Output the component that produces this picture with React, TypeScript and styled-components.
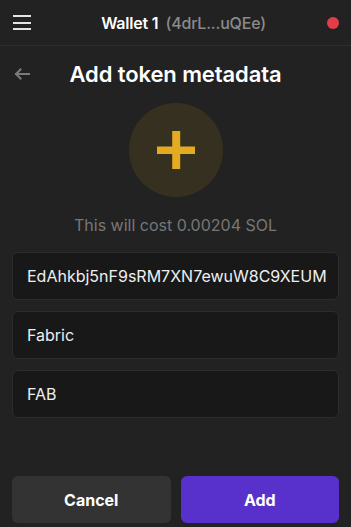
import React from "react";
import styled, { createGlobalStyle } from "styled-components";

const Global = createGlobalStyle`
  html, body { margin: 0; padding: 0; background: #222222; }
  body { font-family: Inter, "Noto Sans", sans-serif; }
  * { box-sizing: border-box; }
`;

const Screen = styled.div`
  width: 351px;
  height: 527px;
  display: flex;
  flex-direction: column;
  background: #222222;
  color: #ffffff;
`;

const Header = styled.header`
  height: 46px;
  flex-shrink: 0;
  display: grid;
  grid-template-columns: 44px 1fr 44px;
  align-items: center;
  border-bottom: 1px solid #2e2e2e;
`;

const MenuButton = styled.div`
  display: flex;
  flex-direction: column;
  gap: 4.5px;
  padding-left: 13px;
  span {
    display: block;
    width: 18px;
    height: 2px;
    background: #e4e4e4;
  }
`;

const WalletTitle = styled.div`
  display: flex;
  justify-content: center;
  gap: 7px;
  padding-left: 16px;
  font-size: 16px;
  font-weight: 600;
  letter-spacing: -0.2px;
`;

const WalletAddr = styled.span`
  color: #8a8a8a;
  font-weight: 500;
`;

const StatusDot = styled.div`
  justify-self: end;
  margin-right: 12px;
  width: 12px;
  height: 12px;
  border-radius: 50%;
  background: #e33d4a;
`;

const Body = styled.main`
  flex: 1;
  display: flex;
  flex-direction: column;
  padding: 0 12px;
`;

const TitleRow = styled.div`
  display: grid;
  grid-template-columns: 40px 1fr 40px;
  align-items: center;
  height: 56px;
`;

const BackArrow = styled.svg`
  width: 16px;
  height: 12px;
  margin-left: 2px;
`;

const PageTitle = styled.h1`
  margin: 0;
  text-align: center;
  font-size: 22px;
  font-weight: 600;
  color: #ffffff;
  letter-spacing: -0.1px;
`;

const IconCircle = styled.div`
  align-self: center;
  width: 94px;
  height: 94px;
  border-radius: 50%;
  background: #35301f;
  display: flex;
  align-items: center;
  justify-content: center;
  margin-top: 1px;
`;

const Cost = styled.p`
  margin: 18px 0 0;
  text-align: center;
  font-size: 16px;
  color: #777777;
  line-height: 20px;
`;

const Fields = styled.div`
  display: flex;
  flex-direction: column;
  gap: 11px;
  margin-top: 17px;
`;

const Field = styled.div`
  height: 48px;
  border-radius: 6px;
  background: #181818;
  border: 1px solid #2c2c2c;
  display: flex;
  align-items: center;
  padding-left: 14px;
  font-size: 16px;
  font-weight: 400;
  color: #efefef;
  white-space: nowrap;
  overflow: hidden;
`;

const Actions = styled.div`
  margin-top: auto;
  margin-bottom: 4px;
  display: grid;
  grid-template-columns: 1fr 1fr;
  gap: 10px;
`;

const Button = styled.button<{ $primary?: boolean }>`
  height: 47px;
  border: none;
  border-radius: 6px;
  font-family: Inter, "Noto Sans", sans-serif;
  font-size: 16px;
  font-weight: 700;
  color: #ffffff;
  background: ${(p) => (p.$primary ? "#5831cc" : "#333333")};
`;

export default function App() {
  return (
    <>
      <Global />
      <Screen>
        <Header>
          <MenuButton>
            <span />
            <span />
            <span />
          </MenuButton>
          <WalletTitle>
            <span>Wallet 1</span>
            <WalletAddr>(4drL...uQEe)</WalletAddr>
          </WalletTitle>
          <StatusDot />
        </Header>
        <Body>
          <TitleRow>
            <BackArrow viewBox="0 0 16 12" fill="none">
              <path
                d="M15 6H2M6.5 1.5L2 6l4.5 4.5"
                stroke="#7a7a7a"
                strokeWidth="2"
                strokeLinecap="square"
              />
            </BackArrow>
            <PageTitle>Add token metadata</PageTitle>
            <span />
          </TitleRow>
          <IconCircle>
            <svg width="38" height="38" viewBox="0 0 38 38">
              <rect x="0" y="15.5" width="38" height="7.5" fill="#e4ab22" />
              <rect x="15.2" y="0" width="8" height="38" fill="#e4ab22" />
            </svg>
          </IconCircle>
          <Cost>This will cost 0.00204 SOL</Cost>
          <Fields>
            <Field>EdAhkbj5nF9sRM7XN7ewuW8C9XEUM</Field>
            <Field>Fabric</Field>
            <Field>FAB</Field>
          </Fields>
          <Actions>
            <Button>Cancel</Button>
            <Button $primary>Add</Button>
          </Actions>
        </Body>
      </Screen>
    </>
  );
}
